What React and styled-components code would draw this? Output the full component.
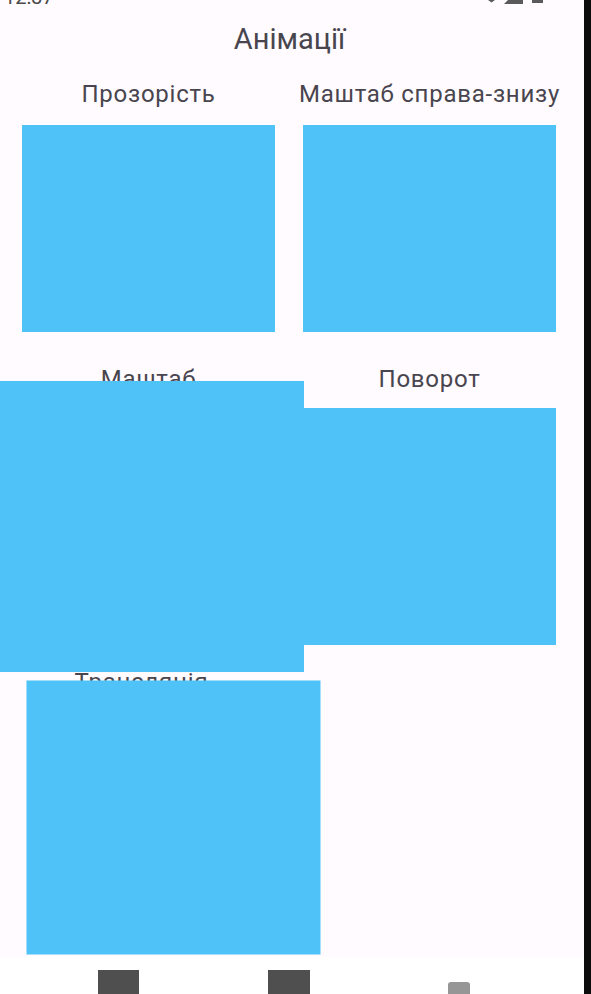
import React from "react";
import styled, { createGlobalStyle } from "styled-components";

const GlobalStyle = createGlobalStyle`
  * {
    box-sizing: border-box;
  }
  body {
    margin: 0;
    background: #0c0c0c;
    font-family: Roboto, "Noto Sans", sans-serif;
  }
`;

const Screen = styled.div`
  width: 584px;
  height: 994px;
  background: #fffbfe;
  display: flex;
  flex-direction: column;
  overflow: hidden;
`;

const StatusBar = styled.div`
  flex: none;
  height: 6px;
  padding: 0 38px 2px 4px;
  display: flex;
  justify-content: space-between;
  align-items: flex-end;
  overflow: hidden;
`;

const Clock = styled.span`
  font-size: 20px;
  line-height: 14px;
  color: #4a4a4a;
`;

const StatusIcons = styled.svg`
  align-self: flex-start;
  width: 60px;
  height: 6px;
  fill: #5a5a5a;
`;

const Main = styled.main`
  flex: 1;
  min-height: 0;
  display: flex;
  flex-direction: column;
`;

const Title = styled.h1`
  margin: 16px 0 0;
  padding-right: 5px;
  font-size: 29px;
  line-height: 34px;
  font-weight: 400;
  text-align: center;
  color: #49454f;
`;

const Grid = styled.div`
  display: grid;
  grid-template-columns: 281px 281px;
  row-gap: 33px;
  padding-left: 8px;
  margin-top: 24px;
`;

const Cell = styled.div`
  display: flex;
  flex-direction: column;
  align-items: center;
`;

const SingleCell = styled(Cell)`
  width: 283px;
  margin-top: 22.5px;
`;

const Label = styled.span`
  font-size: 24px;
  line-height: 28px;
  letter-spacing: 0.75px;
  color: #49454f;
  white-space: nowrap;
`;

const Box = styled.div`
  flex: none;
  width: ${(p) => p.$w || 253}px;
  height: ${(p) => p.$h}px;
  margin-top: ${(p) => p.$gap}px;
  background: #4fc3f7;
  transform: ${(p) => p.$transform || "none"};
`;

const NavBar = styled.nav`
  flex: none;
  height: 37px;
  background: #ffffff;
  display: grid;
  grid-template-columns: repeat(3, 170px);
  align-items: start;
  padding-left: 33.5px;
  overflow: hidden;
  position: relative;
  z-index: 1;
`;

const NavIcon = styled.div`
  justify-self: center;
  width: ${(p) => p.$w}px;
  height: 30px;
  margin-top: ${(p) => p.$top}px;
  background: ${(p) => p.$color};
  border-radius: ${(p) => p.$radius || "0"};
`;

export default function App() {
  return (
    <>
      <GlobalStyle />
      <Screen>
        <StatusBar>
          <Clock>12:37</Clock>
          <StatusIcons viewBox="0 0 60 6">
            <polygon points="2,0 9,0 5.5,2.5" />
            <polygon points="18,4 37,4 37,0 22,0" />
            <rect x="46" y="0" width="11" height="3" />
          </StatusIcons>
        </StatusBar>

        <Main>
          <Title>Анімації</Title>

          <Grid>
            <Cell>
              <Label>Прозорість</Label>
              <Box $h={207} $gap={17} />
            </Cell>
            <Cell>
              <Label>Маштаб справа-знизу</Label>
              <Box $h={207} $gap={17} />
            </Cell>
            <Cell>
              <Label>Маштаб</Label>
              <Box
                $h={237}
                $gap={15}
                $transform="translateX(3.5px) scale(1.2016, 1.228)"
              />
            </Cell>
            <Cell>
              <Label>Поворот</Label>
              <Box $h={237} $gap={15} />
            </Cell>
          </Grid>

          <SingleCell>
            <Label>Трансляція</Label>
            <Box
              $w={294}
              $h={274}
              $gap={16}
              $transform="translate(31.5px, -31.5px)"
            />
          </SingleCell>
        </Main>

        <NavBar>
          <NavIcon $w={41} $top={13} $color="#4f4f4f" />
          <NavIcon $w={42} $top={13} $color="#4f4f4f" />
          <NavIcon $w={22} $top={25} $color="#969696" $radius="3px 3px 0 0" />
        </NavBar>
      </Screen>
    </>
  );
}
